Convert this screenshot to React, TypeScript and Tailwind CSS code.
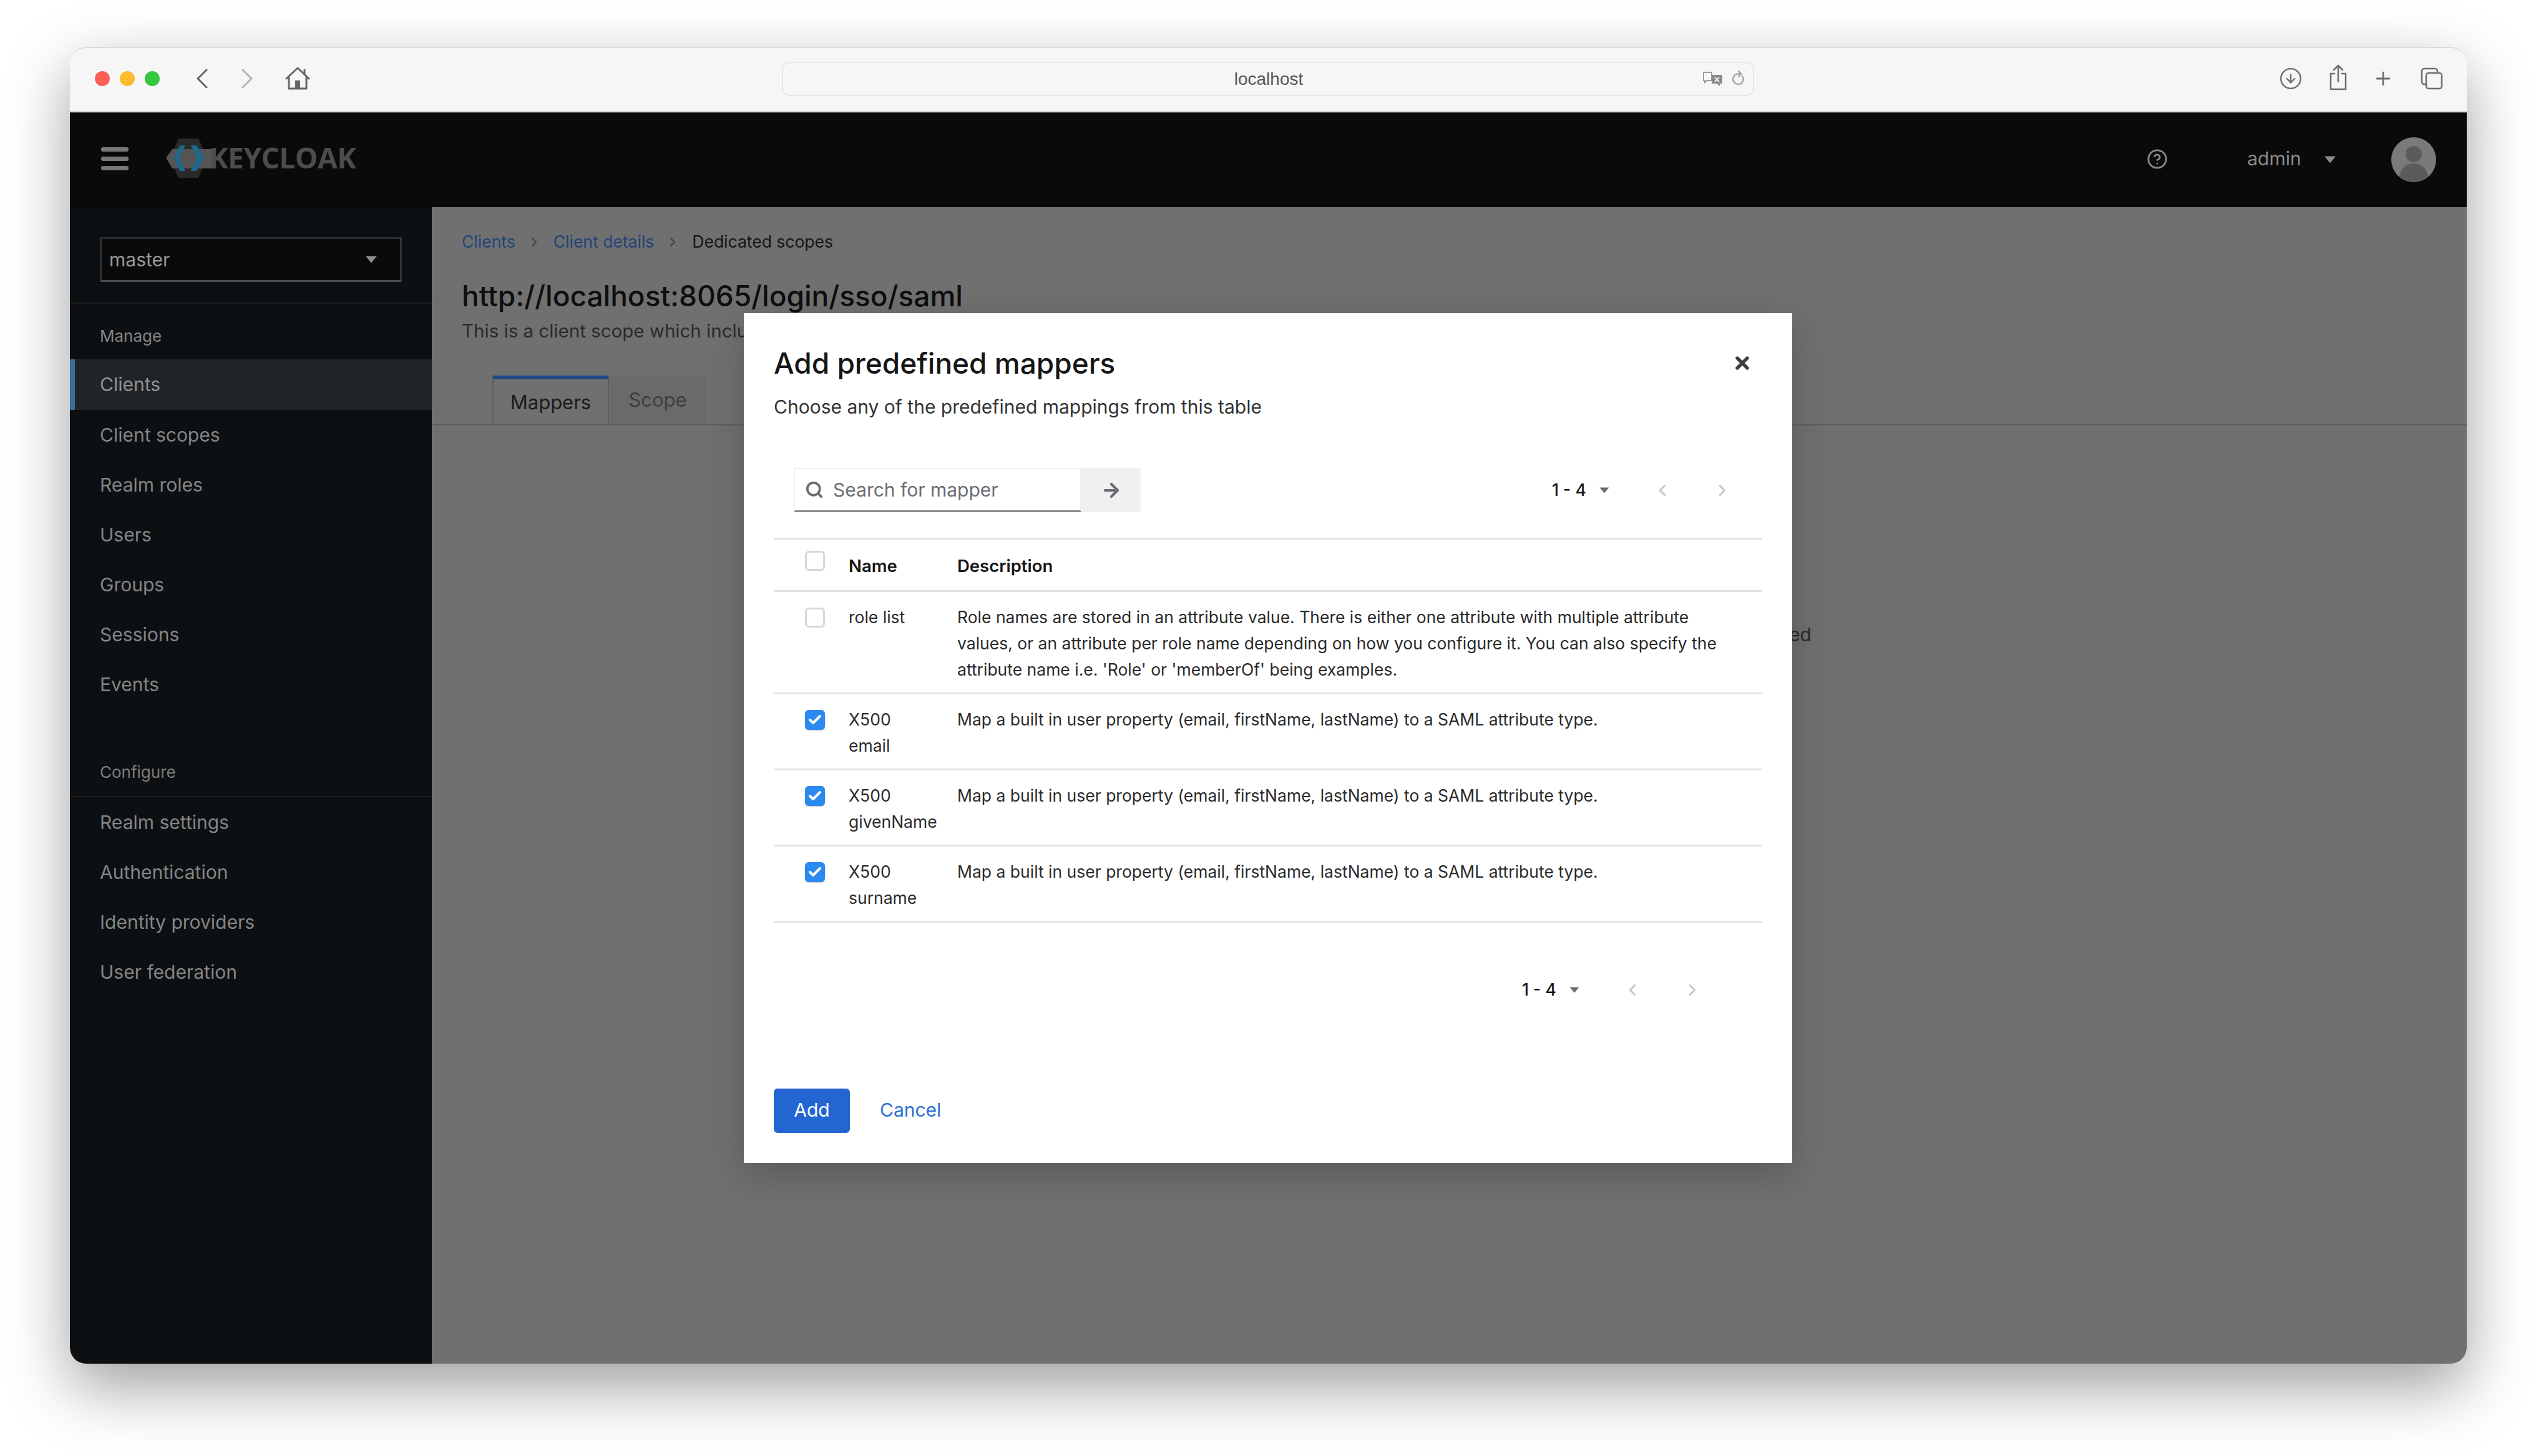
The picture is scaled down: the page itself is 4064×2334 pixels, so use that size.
import { ArrowRight, ChevronLeft, ChevronRight, CircleHelp, Search, X, Check, Plus, CircleArrowDown } from "lucide-react";

const Caret = ({ className = "" }: { className?: string }) => (
  <svg viewBox="0 0 16 10" className={className} fill="currentColor"><path d="M0.5 0.5h15L8 9.5z" /></svg>
);

const Box = ({ checked = false }: { checked?: boolean }) =>
  checked ? (
    <div className="w-[32px] h-[32px] rounded-[6px] bg-[#2b8af0] flex items-center justify-center shadow-[0_1px_2px_rgba(0,0,0,0.25)]">
      <Check className="w-[24px] h-[24px] text-white" strokeWidth={4} />
    </div>
  ) : (
    <div className="w-[32px] h-[32px] rounded-[6px] bg-white border-[3px] border-[#d8d8d8]" />
  );

const Pager = () => (
  <div className="flex items-center h-[50px]">
    <span className="text-[26.5px] font-medium text-[#151515] w-[76px] whitespace-pre">1 - 4</span>
    <Caret className="w-[16px] h-[10px] text-[#6a6e73]" />
    <ChevronLeft className="w-[30px] h-[30px] text-[#c6c7c8] ml-[70px]" strokeWidth={2.5} />
    <ChevronRight className="w-[30px] h-[30px] text-[#c6c7c8] ml-[66px]" strokeWidth={2.5} />
  </div>
);

const mapDesc = "Map a built in user property (email, firstName, lastName) to a SAML attribute type.";

const rows = [
  { id: "email", second: "email" },
  { id: "given", second: "givenName" },
  { id: "sur", second: "surname" },
];

const manage = ["Clients", "Client scopes", "Realm roles", "Users", "Groups", "Sessions", "Events"];
const configure = ["Realm settings", "Authentication", "Identity providers", "User federation"];

export default function App() {
  return (
    <div className="w-[4064px] h-[2334px] bg-white pt-[75px] pl-[112px] font-['Inter',sans-serif] overflow-hidden">
      <div className="relative w-[3841px] h-[2111px] rounded-[26px] flex flex-col shadow-[0_38px_100px_rgba(0,0,0,0.38)]">
        {/* Browser toolbar */}
        <div className="h-[104px] shrink-0 rounded-t-[26px] bg-[#f6f6f6] border-t-[2px] border-[#dcdcdc] flex items-center pb-[4px] text-[#666]">
          <div className="flex gap-[16px] ml-[40px]">
            <div className="w-[24px] h-[24px] rounded-full bg-[#fd5f57]" />
            <div className="w-[24px] h-[24px] rounded-full bg-[#fdbb2e]" />
            <div className="w-[24px] h-[24px] rounded-full bg-[#36c73f]" />
          </div>
          <svg viewBox="0 0 20 32" className="w-[20px] h-[32px] ml-[58px]" fill="none" stroke="#666" strokeWidth="3" strokeLinecap="round" strokeLinejoin="round"><path d="M17 2 3 16l14 14" /></svg>
          <svg viewBox="0 0 20 32" className="w-[20px] h-[32px] ml-[52px]" fill="none" stroke="#b5b5b5" strokeWidth="3" strokeLinecap="round" strokeLinejoin="round"><path d="M3 2l14 14L3 30" /></svg>
          <svg viewBox="0 0 40 38" className="w-[40px] h-[38px] ml-[51px]" fill="none" stroke="#666" strokeWidth="3" strokeLinecap="round" strokeLinejoin="round"><path d="M2 19 20 2l18 17M6 16v19h28V16M31 5v8" /><path d="M16 35V22h8v13z" fill="#666" stroke="none" /></svg>
          <div className="w-[1558px] h-[55px] ml-[756px] rounded-[12px] border-[2px] border-[#e6e6e6] bg-[#f6f6f6] flex items-center">
            <span className="flex-1 text-center text-[28px] font-['Liberation_Sans',sans-serif] text-[#555] pl-[84px] pt-[2px]">localhost</span>
            <svg viewBox="0 0 36 28" className="w-[36px] h-[28px]" fill="none"><path d="M3 4h13v13H9l-4 3v-3H3z" stroke="#9a9a9a" strokeWidth="2" /><path d="M16 8h17v14h-4v4l-5-4h-8z" fill="#8a8a8a" /><path d="M21 12l7 7M28 12l-7 7" stroke="#eee" strokeWidth="2" /></svg>
            <svg viewBox="0 0 24 30" className="w-[22px] h-[28px] ml-[12px] mr-[12px]" fill="none" stroke="#a5a5a5" strokeWidth="2.5" strokeLinecap="round"><path d="M19 11a9 9 0 1 1-6-4h3M12 2l5 5-5 5" /></svg>
          </div>
          <CircleArrowDown className="w-[38px] h-[38px] text-[#6e6e6e] ml-[841px]" strokeWidth={1.5} />
          <svg viewBox="0 0 32 42" className="w-[32px] h-[42px] ml-[41px] mb-[4px]" fill="none" stroke="#6e6e6e" strokeWidth="2.5" strokeLinecap="round" strokeLinejoin="round"><path d="M10 15H4v25h24V15h-6M16 28V2M9 9l7-7 7 7" /></svg>
          <Plus className="w-[34px] h-[34px] text-[#6e6e6e] ml-[39px]" strokeWidth={2} />
          <svg viewBox="0 0 36 36" className="w-[36px] h-[36px] ml-[43px]" fill="none" stroke="#6e6e6e" strokeWidth="2.5" strokeLinejoin="round"><rect x="9" y="9" width="25" height="25" rx="4" /><path d="M9 27H6a4 4 0 0 1-4-4V6a4 4 0 0 1 4-4h17a4 4 0 0 1 4 4v3" /></svg>
        </div>

        {/* Masthead */}
        <div className="h-[153px] shrink-0 bg-[#0a0a0a] border-t-[2px] border-[#555] flex items-center">
          <div className="flex flex-col gap-[8px] ml-[50px] mb-[4px]">
            <div className="w-[44px] h-[7px] rounded-[3px] bg-[#777]" />
            <div className="w-[44px] h-[7px] rounded-[3px] bg-[#777]" />
            <div className="w-[44px] h-[7px] rounded-[3px] bg-[#777]" />
          </div>
          <svg viewBox="0 0 76 64" className="w-[76px] h-[64px] ml-[60px] mb-[6px]">
            <path d="M20 0h32l14 30-14 33H20L6 32z" fill="#2a2a2a" />
            <path d="M0 31 10 17h64v31H10z" fill="#555" />
            <path d="M22 11h9L21 31l10 21h-9L13 31z" fill="#1d6a8a" />
            <path d="M40 11h9l12 20-12 21h-9l10-21z" fill="#1d6a8a" />
          </svg>
          <span className="text-[46px] font-bold tracking-[-0.5px] text-[#4c4c4c] ml-[-7px] mb-[10px] font-['Open_Sans',sans-serif] leading-none">KEYCLOAK</span>
          <CircleHelp className="w-[34px] h-[34px] text-[#8a8a8a] ml-[2870px] mb-[4px]" strokeWidth={2} />
          <span className="text-[30px] text-[#8a8a8a] ml-[127px] mb-[4px]">admin</span>
          <Caret className="w-[20px] h-[12px] text-[#8a8a8a] ml-[36px] mb-[2px]" />
          <div className="w-[72px] h-[72px] ml-[88px] mb-[2px] rounded-full bg-[#7a7a7a] overflow-hidden">
            <svg viewBox="0 0 72 72" className="w-full h-full"><circle cx="36" cy="27" r="13" fill="#5b5b5b" /><path d="M12 72c0-20 10-30 24-30s24 10 24 30z" fill="#5b5b5b" /></svg>
          </div>
        </div>

        <div className="flex-1 flex min-h-0">
          {/* Sidebar */}
          <div className="w-[580px] shrink-0 bg-[#0c1012] rounded-bl-[26px] flex flex-col">
            <div className="pt-[48px] pb-[33px] px-[48px] border-b-[2px] border-[#1b1e20]">
              <div className="h-[72px] w-[484px] bg-[#0a0a0a] border-[3px] border-t-[#2d2d2d] border-x-[#333] border-b-[#4e4e4e] flex items-center pl-[12px] pr-[36px]">
                <span className="flex-1 text-[30px] text-[#999]">master</span>
                <Caret className="w-[20px] h-[12px] text-[#8c8c8c]" />
              </div>
            </div>
            <div className="mt-[31px] h-[40px] pl-[48px] flex items-center text-[26px] text-[#858585]">Manage</div>
            <div className="mt-[18px] flex flex-col">
              {manage.map((m, i) => (
                <div key={m} className={i === 0
                  ? "h-[81px] flex items-center pl-[40px] border-l-[8px] border-[#3d6e99] bg-[#212427] text-[30px] text-[#929292]"
                  : "h-[80px] flex items-center pl-[48px] text-[30px] text-[#858585]"}>{m}</div>
              ))}
            </div>
            <div className="mt-[81px] pb-[19px] pl-[48px] h-[60px] border-b-[2px] border-[#1b1e20] flex items-center text-[26px] text-[#7c7c7c]">Configure</div>
            <div className="flex flex-col">
              {configure.map((m) => (
                <div key={m} className="h-[80px] flex items-center pl-[48px] text-[30px] text-[#858585]">{m}</div>
              ))}
            </div>
          </div>

          {/* Main */}
          <div className="flex-1 bg-[#707070] rounded-br-[26px] flex flex-col min-w-0">
            <div className="pl-[48px] pt-[36px]">
              <div className="h-[40px] flex items-center text-[26.5px]">
                <span className="text-[#1f4478]">Clients</span>
                <ChevronRight className="w-[24px] h-[24px] text-[#4a4a4a] ml-[18px] mr-[19px]" strokeWidth={2.5} />
                <span className="text-[#1f4478]">Client details</span>
                <ChevronRight className="w-[24px] h-[24px] text-[#4a4a4a] ml-[18px] mr-[19px]" strokeWidth={2.5} />
                <span className="text-[#151515]">Dedicated scopes</span>
              </div>
              <div className="mt-[36px] h-[60px] flex items-center text-[46px] font-medium text-[#0e0e0e] whitespace-nowrap">http://localhost:8065/login/sso/saml</div>
              <div className="mt-[6px] h-[40px] flex items-center text-[29.5px] text-[#2a2a2a] whitespace-nowrap">This is a client scope which includes the mappers</div>
            </div>
            <div className="mt-[52px] h-[80px] pl-[97px] border-b-[2px] border-[#5e5e5e] flex">
              <div className="w-[187px] h-[80px] border-t-[6px] border-t-[#1f4a8a] border-x-[2px] border-x-[#5e5e5e] flex items-center justify-center text-[31px] text-[#1a1a1a]">Mappers</div>
              <div className="w-[156px] h-[78px] bg-[#6a6a6a] flex items-center justify-center text-[31px] text-[#3e3e3e]">Scope</div>
            </div>
            <div className="mt-[315px] h-[40px] pr-[1050px] flex items-center justify-end text-[30px] text-[#2a2a2a] whitespace-nowrap">If you want to add mappers, please click the button below to add some predefined</div>
          </div>
        </div>

        {/* Modal */}
        <div className="absolute left-[1080px] top-[427px] w-[1680px] h-[1362px] bg-white pl-[48px] shadow-[0_20px_60px_rgba(0,0,0,0.2)]">
          <div className="pt-[50px] h-[110px] flex items-center justify-between pr-[64px]">
            <span className="text-[46px] font-medium text-[#151515]">Add predefined mappers</span>
            <X className="w-[32px] h-[32px] text-[#3c3f42]" strokeWidth={4} />
          </div>
          <div className="mt-[18px] h-[44px] flex items-center text-[30px] text-[#333]">Choose any of the predefined mappings from this table</div>
          <div className="mt-[76px] h-[71px] pl-[32px] pr-[97px] flex items-center">
            <div className="w-[461px] h-[71px] border-[2px] border-[#f0f0f0] border-b-[3px] border-b-[#8a8d90] flex items-center pl-[16px]">
              <Search className="w-[30px] h-[30px] text-[#6a6e73]" strokeWidth={3} />
              <span className="ml-[15px] text-[30px] text-[#6a6e73]">Search for mapper</span>
            </div>
            <div className="w-[95px] h-[71px] bg-[#f0f0f0] flex items-center justify-center">
              <ArrowRight className="w-[34px] h-[34px] text-[#6a6e73]" strokeWidth={3} />
            </div>
            <div className="flex-1 flex justify-end"><Pager /></div>
          </div>
          <div className="mt-[41px] w-[1584px] border-t-[3px] border-[#e2e2e2]">
            <div className="h-[84px] grid grid-cols-[120px_174px_1fr] border-b-[3px] border-[#e2e2e2] text-[27.5px] font-semibold text-[#151515]">
              <div className="pl-[50px] pt-[18px]"><Box /></div>
              <div className="pt-[22px]">Name</div>
              <div className="pt-[22px]">Description</div>
            </div>
            <div className="h-[164px] grid grid-cols-[120px_174px_1fr] border-b-[3px] border-[#e2e2e2] text-[26.5px] leading-[42px] text-[#2a2a2a]">
              <div className="pl-[50px] pt-[25px]"><Box /></div>
              <div className="pt-[19px]">role list</div>
              <div className="pt-[19px] pr-[50px]">Role names are stored in an attribute value. There is either one attribute with multiple attribute values, or an attribute per role name depending on how you configure it. You can also specify the attribute name i.e. 'Role' or 'memberOf' being examples.</div>
            </div>
            {rows.map((r) => (
              <div key={r.id} className="h-[122px] grid grid-cols-[120px_174px_1fr] border-b-[3px] border-[#e2e2e2] text-[26.5px] leading-[42px] text-[#2a2a2a]">
                <div className="pl-[50px] pt-[25px]"><Box checked /></div>
                <div className="pt-[19px]">X500<br />{r.second}</div>
                <div className="pt-[19px]">{mapDesc}</div>
              </div>
            ))}
          </div>
          <div className="mt-[83px] w-[1487px] flex justify-end"><Pager /></div>
          <div className="mt-[133px] flex items-center">
            <div className="w-[122px] h-[71px] rounded-[6px] bg-[#2366d1] flex items-center justify-center text-[30px] text-white pb-[3px]">Add</div>
            <span className="ml-[48px] text-[30px] text-[#2b6fd6] pb-[3px]">Cancel</span>
          </div>
        </div>
      </div>
    </div>
  );
}
